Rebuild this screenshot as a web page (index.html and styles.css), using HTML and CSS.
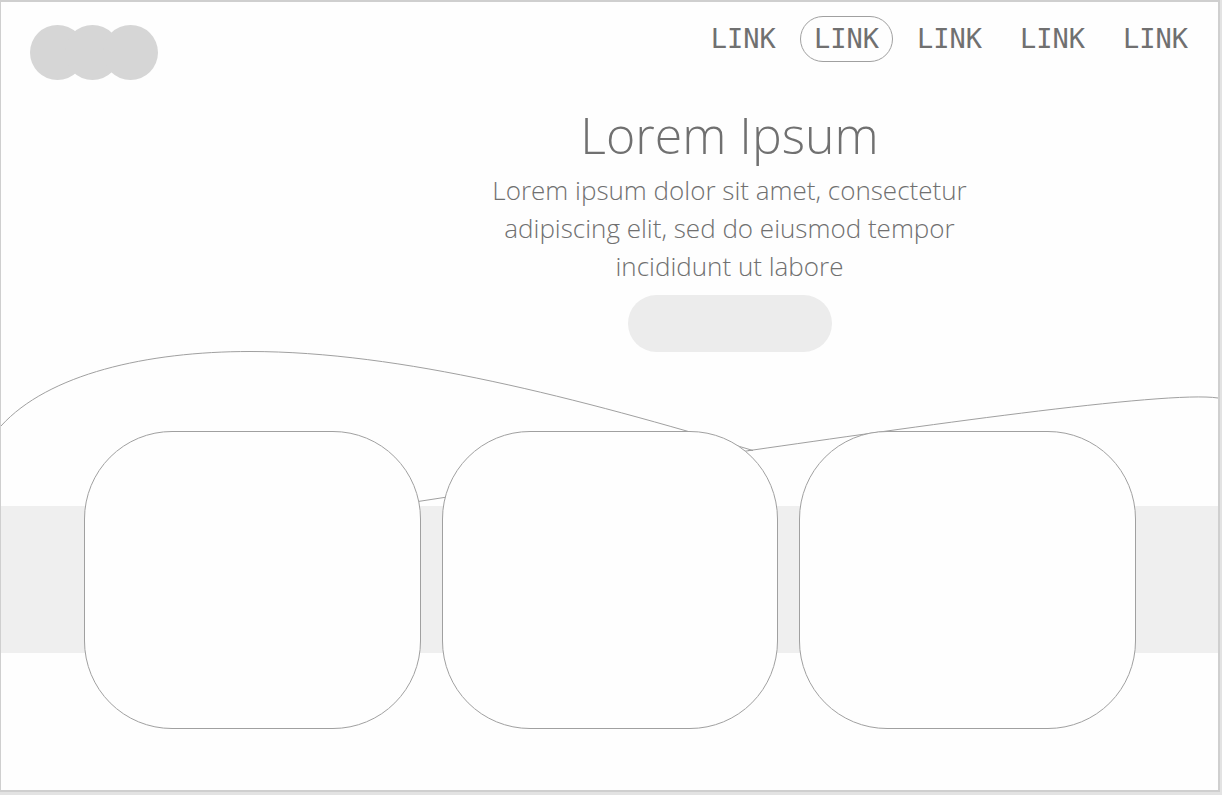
FILE: index.html
```html
<!DOCTYPE html>
<html lang="en">
<head>
<meta charset="utf-8">
<meta name="viewport" content="width=device-width, initial-scale=1">
<title>Lorem Ipsum</title>
<link rel="stylesheet" href="styles.css">
</head>
<body>
<div class="page">
  <header class="header">
    <svg class="logo" width="128" height="55" viewBox="0 0 128 55" aria-hidden="true">
      <circle cx="27.5" cy="27.5" r="27.5"/>
      <circle cx="62.5" cy="27.5" r="27.5"/>
      <circle cx="100.5" cy="27.5" r="27.5"/>
    </svg>
    <nav class="nav">
      <a class="nav-link" href="#">LINK</a>
      <a class="nav-link nav-link-active" href="#">LINK</a>
      <a class="nav-link" href="#">LINK</a>
      <a class="nav-link" href="#">LINK</a>
      <a class="nav-link" href="#">LINK</a>
    </nav>
  </header>
  <main class="main">
    <section class="hero">
      <h1 class="title">Lorem Ipsum</h1>
      <p class="lead">Lorem ipsum dolor sit amet, consectetur<br>adipiscing elit, sed do eiusmod tempor<br>incididunt ut labore</p>
      <button class="cta" type="button" aria-label="Lorem ipsum"></button>
    </section>
    <section class="stage">
      <svg class="waves" viewBox="0 0 1217 154" preserveAspectRatio="none" aria-hidden="true">
        <path d="M0 74C47 22 146 -.5 249 -.5C399 -.5 577 46 752 98.5H747"/>
        <path d="M417 149.5L752 98C899 77 1166 38 1217 46"/>
      </svg>
      <div class="band"></div>
      <div class="cards">
        <article class="card"></article>
        <article class="card"></article>
        <article class="card"></article>
      </div>
    </section>
  </main>
</div>
</body>
</html>
```
FILE: styles.css
```css
* {
  box-sizing: border-box;
}

body {
  margin: 0;
  min-height: 100vh;
  display: flex;
  padding: 0 2px 3px 0;
  background: #e3e3e3;
}

.page {
  flex: 1;
  border: 2px solid #cfcfcf;
  border-left-width: 1px;
  background: #fefefe;
}

.header {
  display: flex;
  justify-content: space-between;
  align-items: flex-start;
  padding: 14px 16px 0 29px;
}

.logo {
  margin-top: 9px;
  fill: #d6d6d6;
}

.nav {
  display: flex;
  gap: 10px;
}

.nav-link {
  padding: 0 13px;
  border: 1px solid transparent;
  border-radius: 23px;
  color: #707070;
  font: 27px/44px "DejaVu Sans Mono", monospace;
  text-decoration: none;
}

.nav-link-active {
  border-color: #a0a0a0;
}

.hero {
  display: flex;
  flex-direction: column;
  align-items: center;
  padding: 22px 0 0 240px;
  color: #707070;
  font-family: "Open Sans", "Noto Sans", sans-serif;
  font-weight: 300;
  text-align: center;
}

.title {
  margin: 0 0 2px;
  font-size: 50px;
  font-weight: 300;
  line-height: 67px;
}

.lead {
  margin: 0 0 10px;
  font-size: 26px;
  line-height: 38px;
}

.cta {
  width: 204px;
  height: 57px;
  border: 0;
  border-radius: 29px;
  background: #ececec;
}

.stage {
  position: relative;
  padding: 79px 82px 61px 83px;
}

.waves {
  position: absolute;
  top: 0;
  left: 0;
  width: 100%;
  height: 154px;
  overflow: visible;
  fill: none;
  stroke: #a0a0a0;
}

.band {
  position: absolute;
  top: 154px;
  left: 0;
  right: 0;
  height: 147px;
  background: #efefef;
}

.cards {
  position: relative;
  display: grid;
  grid-template-columns: repeat(3, 1fr);
  gap: 21px;
}

.card {
  height: 298px;
  border: 1px solid #a0a0a0;
  border-radius: 88px;
  background: #fefefe;
}
```
